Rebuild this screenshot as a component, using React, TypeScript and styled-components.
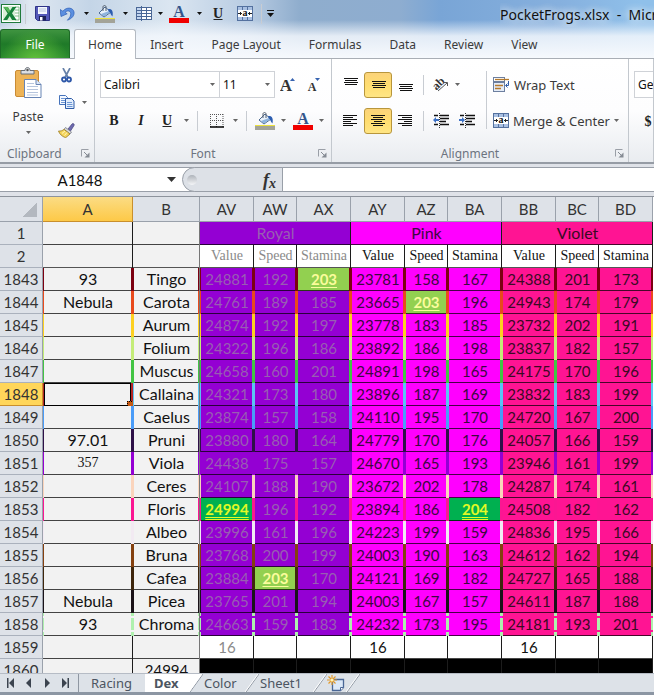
import React from "react";
import styled, { createGlobalStyle, css } from "styled-components";

const UI = `"Noto Sans", "Open Sans", sans-serif`;
const CELL = `Lato, "Liberation Sans", sans-serif`;
const SERIF = `"Liberation Serif", serif`;

const GlobalStyle = createGlobalStyle`
  * { box-sizing: border-box; }
  html, body { margin: 0; padding: 0; }
  body { font-family: ${UI}; font-size: 12px; color: #3b3b3b; background: #fff; }
  button, select, input { font: inherit; color: inherit; margin: 0; padding: 0; border: 0; background: none; border-radius: 0; }
  svg { display: block; flex: none; }
`;

const Window = styled.div`
  display: flex;
  flex-direction: column;
  height: 100vh;
  overflow: hidden;
`;

/* ---------- title bar and ribbon tabs ---------- */

const TopArea = styled.header`
  background:
    linear-gradient(to bottom, rgba(255, 255, 255, 0) 20px, rgba(243, 247, 252, 0.85) 36px, #f6f9fd 58px),
    linear-gradient(to right, #b4c8dd 0, #dfe8f1 30px, #c4d5e7 90px, #dbe6f1 170px, #b7cbe2 250px, #8fadcd 300px, #8eadd0 400px, #79a5d6 440px, #86b0de 560px, #8fc0ea 640px);
  border-bottom: 1px solid #a9aeb5;
`;

const TitleBar = styled.div`
  display: flex;
  align-items: center;
  height: 29px;
  padding-bottom: 2px;
`;

const QuickAccess = styled.div`
  display: flex;
  align-items: center;
  flex: none;
  height: 26px;
`;

const Title = styled.h1`
  margin: 2px 0 0 224px;
  min-width: 0;
  flex: 1;
  overflow: hidden;
  white-space: pre;
  font-size: 14px;
  font-weight: 400;
  line-height: 24px;
  color: #111;
  text-shadow: 0 0 8px #fff, 0 0 8px rgba(255, 255, 255, 0.7);
`;

const TabStrip = styled.nav`
  display: flex;
  height: 29px;
`;

const FileTab = styled.button`
  width: 70px;
  margin-right: 4px;
  flex: none;
  border: 1px solid #1d6a26;
  border-bottom: 0;
  border-radius: 3px 3px 0 0;
  color: #fff;
  background: radial-gradient(ellipse at 50% 110%, #63c23c 0, rgba(60, 160, 50, 0) 70%), linear-gradient(#3f9440, #1f7a28 50%, #2b8c2e);
`;

const RibbonTab = styled.button<{ $active?: boolean }>`
  flex: none;
  padding: 0 13px;
  margin-bottom: ${(p) => (p.$active ? "-1px" : "0")};
  border: 1px solid ${(p) => (p.$active ? "#b4bac2" : "transparent")};
  border-bottom: 0;
  border-radius: 3px 3px 0 0;
  background: ${(p) => (p.$active ? "#fff" : "none")};
`;

/* ---------- ribbon ---------- */

const Ribbon = styled.div`
  display: flex;
  height: 105px;
  flex: none;
  background: linear-gradient(#fff 0, #fdfdfe 50%, #e9ecf0 100%);
  border-bottom: 2px solid #969ca5;
`;

const Group = styled.section<{ $w?: number }>`
  display: flex;
  flex-direction: column;
  flex: ${(p) => (p.$w ? `none` : "1 0 0")};
  width: ${(p) => (p.$w ? `${p.$w}px` : "auto")};
  min-width: 0;
  overflow: hidden;
  border-right: 1px solid #c3c8ce;
`;

const GroupBody = styled.div`
  display: flex;
  flex: 1;
  padding: 12px 0 0 5px;
`;

const GroupFooter = styled.div`
  display: flex;
  align-items: center;
  flex: none;
  height: 17px;
  padding: 0 4px 0 7px;
  line-height: 17px;
  color: #6c7480;
`;

const GroupLabel = styled.span<{ $center?: boolean }>`
  flex: 1;
  padding-right: ${(p) => (p.$center ? "14px" : "0")};
  text-align: ${(p) => (p.$center ? "center" : "left")};
`;

const Rows = styled.div`
  display: flex;
  flex-direction: column;
  gap: 9px;
`;

const Row = styled.div`
  display: flex;
  align-items: center;
  height: 27px;
`;

const IconButton = styled.button<{ $w: number; $on?: boolean }>`
  display: flex;
  align-items: center;
  justify-content: center;
  flex: none;
  width: ${(p) => p.$w}px;
  height: 26px;
  ${(p) =>
    p.$on &&
    css`
      border: 1px solid #b8963c;
      border-radius: 3px;
      background: linear-gradient(#fbd37a, #ffdd70 50%, #ffe584);
    `}
`;

const Divider = styled.span<{ $w: number; $h?: number }>`
  flex: none;
  width: ${(p) => p.$w}px;
  height: ${(p) => p.$h ?? 20}px;
  background: linear-gradient(#c8ccd2, #c8ccd2) center / 1px 100% no-repeat;
`;

const ComboBox = styled.label<{ $w: number }>`
  display: flex;
  align-items: center;
  flex: none;
  width: ${(p) => p.$w}px;
  height: 27px;
  padding-right: 4px;
  margin-right: -1px;
  border: 1px solid #cfd2d7;
  background: #fff;
  color: #111;
`;

const ComboSelect = styled.select`
  flex: 1;
  min-width: 0;
  height: 25px;
  padding-left: 3px;
  appearance: none;
  outline: 0;
`;

const PasteButton = styled.button`
  display: flex;
  flex-direction: column;
  align-items: center;
  width: 56px;
  height: 72px;
`;

const PasteText = styled.span`
  line-height: 20px;
  margin: 9px 0 4px;
`;

const ClipboardBody = styled.div`
  display: flex;
  flex: 1;
  padding-top: 8px;
`;

const ClipTools = styled.div`
  display: flex;
  flex-direction: column;
`;

const ClipRow = styled(Row)`
  height: 26px;
  padding-bottom: 10px;
  &:nth-child(2) { padding-bottom: 8px; }
  &:nth-child(3) { padding-bottom: 4px; }
`;

const TextButton = styled.button`
  display: flex;
  align-items: center;
  gap: 4px;
  height: 27px;
  font-size: 13px;
  white-space: nowrap;
`;

/* ---------- formula bar ---------- */

const FormulaBar = styled.div`
  display: flex;
  flex: none;
  height: 33px;
  padding: 3px 0 4px;
  background: #dfe2e8;
  border-bottom: 1px solid #8d939c;
`;

const NameBox = styled.div`
  display: flex;
  align-items: center;
  flex: none;
  width: 182px;
  padding-right: 6px;
  border: solid #999fa8;
  border-width: 1px 0;
  background: #fff;
`;

const NameInput = styled.input`
  flex: 1;
  min-width: 0;
  padding-right: 7px;
  text-align: center;
  font-family: ${CELL};
  font-size: 15px;
  color: #111;
  outline: 0;
`;

const FxArea = styled.div`
  display: flex;
  align-items: center;
  justify-content: space-between;
  flex: none;
  width: 101px;
  padding: 0 6px 0 4px;
  background: #dde1e7;
  border: 1px solid #999fa8;
  border-radius: 13px 0 0 13px;
`;

const FxHolder = styled.div`
  display: flex;
  background: linear-gradient(#999fa8, #999fa8) top / 100% 1px no-repeat, linear-gradient(#999fa8, #999fa8) bottom / 100% 1px no-repeat, #fff;
`;

const Grip = styled.span`
  width: 10px;
  height: 10px;
  border-radius: 5px;
  background: linear-gradient(#aeb3ba, #f5f6f8);
`;

const FxButton = styled.button`
  font-family: ${SERIF};
  font-size: 18px;
  font-style: italic;
  font-weight: 700;
  line-height: 20px;
  color: #333;
  & sub { font-size: 14px; line-height: 0; vertical-align: -2px; }
`;

const FormulaInput = styled.input`
  flex: 1;
  min-width: 0;
  background: #fff;
  border: solid #999fa8;
  border-width: 1px 0;
  outline: 0;
`;

/* ---------- sheet ---------- */

const SheetArea = styled.main`
  flex: 1;
  min-height: 0;
  overflow: hidden;
  background: #fff;
`;

const Sheet = styled.table`
  width: 100%;
  table-layout: fixed;
  border-spacing: 0;
  font-family: ${CELL};
  font-size: 15px;
  line-height: 22px;
  color: #333;
`;

const Col = styled.col<{ $w?: number }>`
  width: ${(p) => (p.$w ? `${p.$w}px` : "auto")};
`;

const ColHead = styled.th<{ $on?: boolean }>`
  height: 25px;
  padding: 0;
  font-weight: 400;
  background: ${(p) => (p.$on ? "linear-gradient(#fbdc84, #fdc947)" : "#dee2e8")};
  border-right: 1px solid ${(p) => (p.$on ? "#c98f2c" : "#9aa1ab")};
  border-bottom: 1px solid ${(p) => (p.$on ? "#c98f2c" : "#9aa1ab")};
`;

const Corner = styled(ColHead)`
  background: linear-gradient(135deg, transparent 50%, #b3b8bf 50%) 22px 5px / 15px 15px no-repeat, #dee2e8;
`;

const RowHead = styled.th<{ $on?: boolean }>`
  height: 23px;
  padding: 0;
  font-weight: 400;
  background: ${(p) => (p.$on ? "#ffd65a" : "#dee2e8")};
  border-right: 1px solid ${(p) => (p.$on ? "#c98f2c" : "#9aa1ab")};
  border-bottom: 1px solid ${(p) => (p.$on ? "#c98f2c" : "#aab1bc")};
`;

const solid = (c: string) => `linear-gradient(${c}, ${c})`;
const dashes = (c: string) =>
  `linear-gradient(${c} 3px, transparent 3px 5px, ${c} 5px 17px, transparent 17px 19px, ${c} 19px)`;

type Mark = "top" | "high";

type CellLook = {
  $fill: string;
  $ink?: string;
  $bar?: string;
  $dashed?: boolean;
  $line?: string;
  $frozen?: boolean;
  $mark?: Mark;
  $serif?: boolean;
  $label?: boolean;
};

const cellBackground = (p: CellLook) => {
  const layers: string[] = [];
  if (p.$frozen) layers.push(`${solid("#777")} right / 1px 100% no-repeat`);
  if (p.$bar) {
    const paint = p.$dashed ? dashes(p.$bar) : solid(p.$bar);
    layers.push(`${paint} left / 1px 100% no-repeat`, `${paint} right / 2px 100% no-repeat`);
  } else {
    layers.push(`${solid("#1c1c1c")} right / 1px 100% no-repeat`);
  }
  layers.push(`${solid(p.$line ?? "rgba(0, 0, 0, 0.72)")} bottom / 100% 1px no-repeat`);
  return `${layers.join(", ")}, ${p.$fill}`;
};

const Cell = styled.td<CellLook>`
  position: relative;
  height: 23px;
  padding: 0 0 1px;
  text-align: center;
  white-space: nowrap;
  color: ${(p) => p.$ink ?? "#111"};
  background: ${cellBackground};
  ${(p) => p.$label && css`font-size: 16px;`}
  ${(p) => p.$serif && css`font-family: ${SERIF}; font-size: 14px;`}
  ${(p) =>
    p.$mark &&
    css`
      color: ${p.$mark === "top" ? "#e2f926" : "#fbfc9c"};
      font-weight: 700;
      text-decoration: underline ${p.$mark === "top" ? "double" : "solid"} 1px;
      text-underline-offset: 2px;
    `}
`;

const SelectionFrame = styled.span`
  position: absolute;
  inset: 0 2px 0 1px;
  border: 1px solid #000;
  box-shadow: 0 1px 0 #f2f2f2, 0 2px 0 #000;
  &::after {
    content: "";
    position: absolute;
    right: -4px;
    bottom: -3px;
    width: 5px;
    height: 5px;
    border: 1px dotted #000;
    background: #c65a14;
  }
`;

type Line = {
  n: number;
  a?: string;
  serif?: boolean;
  name: string;
  bar: string;
  v: string;
  marks?: Record<number, Mark>;
};

const lines: Line[] = [
  { n: 1843, a: "93", name: "Tingo", bar: "#7c0010", v: "24881 192 203 23781 158 167 24388 201 173", marks: { 2: "high" } },
  { n: 1844, a: "Nebula", name: "Carota", bar: "#e84a1c", v: "24761 189 185 23665 203 196 24943 174 179", marks: { 4: "high" } },
  { n: 1845, name: "Aurum", bar: "#fdd020", v: "24874 192 197 23778 183 185 23732 202 191" },
  { n: 1846, name: "Folium", bar: "#c4ec78", v: "24322 196 186 23892 186 198 23837 182 157" },
  { n: 1847, name: "Muscus", bar: "#42c444", v: "24658 160 201 24891 198 165 24175 170 196" },
  { n: 1848, name: "Callaina", bar: "#5cc4f4", v: "24321 173 180 23896 187 169 23832 183 199" },
  { n: 1849, name: "Caelus", bar: "#4a9cf8", v: "23874 157 158 24110 195 170 24720 167 200" },
  { n: 1850, a: "97.01", name: "Pruni", bar: "#2e1048", v: "23880 180 164 24779 170 176 24057 166 159" },
  { n: 1851, a: "357", serif: true, name: "Viola", bar: "#9400d3", v: "24438 175 157 24670 165 193 23946 161 199" },
  { n: 1852, name: "Ceres", bar: "#fad4bc", v: "24107 188 190 23672 202 178 24287 174 161" },
  { n: 1853, name: "Floris", bar: "#fb1692", v: "24994 196 192 23894 186 204 24508 182 162", marks: { 0: "top", 5: "top" } },
  { n: 1854, name: "Albeo", bar: "#f2eaf2", v: "23996 161 196 24223 199 159 24836 195 166" },
  { n: 1855, name: "Bruna", bar: "#84400f", v: "23768 200 199 24003 190 163 24612 162 194" },
  { n: 1856, name: "Cafea", bar: "#3e260c", v: "23884 203 170 24121 169 182 24727 165 188", marks: { 1: "high" } },
  { n: 1857, a: "Nebula", name: "Picea", bar: "#1a1218", v: "23765 201 194 24003 167 157 24611 187 188" },
  { n: 1858, a: "93", name: "Chroma", bar: "#aef0ae", v: "24663 159 183 24232 173 195 24181 193 201" },
];

const bands = [
  { title: "Royal", fill: "#9400d3", ink: "#985eb2", soft: "#8a8a8a" },
  { title: "Pink", fill: "#ff00ff", ink: "#3c0840", soft: "#111" },
  { title: "Violet", fill: "#ff1493", ink: "#3a0a24", soft: "#111" },
];
const columns = ["A", "B", "AV", "AW", "AX", "AY", "AZ", "BA", "BB", "BC", "BD"];
const widths = [43, 90, 67, 54, 43, 54, 54, 43, 54, 54, 43, 54];
const GREY = "#f2f2f2";

/* ---------- sheet tabs ---------- */

const SheetTabs = styled.footer`
  display: flex;
  flex: none;
  height: 22px;
  background: #dde2e8;
  border-top: 1px solid #b6bcc5;
  border-bottom: 3px solid #8c96a3;
`;

const NavButtons = styled.div`
  display: flex;
  align-items: center;
  width: 79px;
  padding: 0 3px 0 1px;
  border-right: 1px solid #8f97a2;
`;

const NavButton = styled.button`
  display: flex;
  flex: 1;
  align-items: center;
  justify-content: center;
`;

const SheetTab = styled.button<{ $w: number; $pad: number; $on?: boolean }>`
  && { padding-left: ${(p) => p.$pad}px; }
  flex: none;
  width: ${(p) => p.$w}px;
  font-size: 13px;
  line-height: 18px;
  text-align: left;
  color: #4c5561;
  font-weight: ${(p) => (p.$on ? 700 : 400)};
  background: ${(p) => (p.$on ? "#fff" : "none")};
`;

const NewSheet = styled.button`
  display: flex;
  align-items: center;
  width: 19px;
`;

/* ---------- icons ---------- */

const Arrow = ({ dark, big }: { dark?: boolean; big?: boolean }) => (
  <svg width={big ? 9 : 5} height={big ? 5 : 3} viewBox="0 0 5 3" preserveAspectRatio="none" aria-hidden="true">
    <path d="M0 0h5L2.500 3z" fill={dark ? "#111" : big ? "#333" : "#666"} />
  </svg>
);

const ExcelLogo = () => (
  <svg width="20" height="19" viewBox="0 0 20 19">
    <rect x=".5" y=".5" width="19" height="18" fill="#fff" stroke="#207a3c" />
    <rect x="2" y="2" width="13" height="15" fill="#d9efd8" />
    <path d="M14 3h4v13h-4" fill="#fff" stroke="#68ad70" strokeWidth=".8" />
    <path d="M14 6h4M14 9h4M14 12h4" stroke="#68ad70" strokeWidth=".8" />
    <path d="M2.500 3h4.300L9 6.800 11.500 3h3.800L11 9.300l4.500 6.700h-4.400L8.700 12 6.200 16h-4l4.500-6.600z" fill="#16813a" />
    <path d="M2.500 3h4.300L9 6.800l-1 2.300z" fill="#57b557" />
  </svg>
);

const SaveIcon = () => (
  <svg width="15" height="15" viewBox="0 0 15 15">
    <path d="M.5.5h14v14h-12l-2-2z" fill="#5358b8" stroke="#2f3487" />
    <rect x="3" y="1" width="9" height="7" fill="#f4f7fd" />
    <path d="M4 3h7M4 5h7" stroke="#b9c4de" />
    <rect x="4" y="10" width="7" height="4.500" fill="#1e2358" />
    <rect x="5" y="11" width="2.500" height="3.500" fill="#fff" />
  </svg>
);

const UndoIcon = () => (
  <svg width="15" height="14" viewBox="0 0 15 14">
    <path d="M0 2.500 1 9.500 7.200 6.800 5 5.400C8 2.500 11.500 4.200 10.600 8c-.4 2-1.600 3.600-3.200 5.200C12 11.600 14.600 8.500 14 5 13.200.6 6.800-.6 2.900 4.200z" fill="#5b8fe0" stroke="#2c5db5" strokeWidth=".7" />
  </svg>
);

const FillIcon = () => (
  <svg width="20" height="18" viewBox="0 0 20 18">
    <path d="M4 8 10 2l6 5-7 5z" fill="#e8f1fb" stroke="#4a6890" />
    <path d="M6 9l8-3 1.500 1L9 11.600z" fill="#8fb4de" />
    <path d="M8 6V2c0-2 3-2 3 0v4" fill="none" stroke="#56606e" />
    <path d="M13 4c4-.5 5.500 2 4.500 7.500C15.500 10 16 8 13.500 6z" fill="#2c5db0" />
    <rect y="13" width="20" height="1" fill="#ece23c" />
    <rect y="14" width="20" height="4" fill="#a3a398" />
  </svg>
);

const FontColorIcon = () => (
  <svg width="20" height="18" viewBox="0 0 20 18">
    <text x="10" y="12" textAnchor="middle" fontFamily="Liberation Serif, serif" fontWeight="700" fontSize="16" fill="#34558c">A</text>
    <rect y="13" width="20" height="5" fill="#f00000" />
  </svg>
);

const TableIcon = () => (
  <svg width="16" height="15" viewBox="0 0 16 15">
    <rect x=".5" y="1.500" width="15" height="12" fill="#fff" stroke="#4a6796" />
    <rect x="1" y="2" width="4" height="11" fill="#c3d6f0" />
    <path d="M5.500 0v15M10.500 2v12M1 4.500h15M1 7.500h15M1 10.500h15" stroke="#4a6796" />
  </svg>
);

const MergeIcon = () => (
  <svg width="16" height="15" viewBox="0 0 16 15">
    <rect x=".5" y=".5" width="15" height="14" fill="#a9c0e2" stroke="#54719f" />
    <path d="M5.500 0v4M10.500 0v4M5.500 11v4M10.500 11v4" stroke="#54719f" />
    <rect x="1" y="4" width="14" height="7" fill="#fff" />
    <text x="8" y="10" textAnchor="middle" fontFamily="Liberation Serif, serif" fontWeight="700" fontSize="10" fill="#111">a</text>
    <path d="M1 7.500h4M11 7.500h4M3.500 6v3M12.500 6v3" stroke="#222" />
  </svg>
);

const PasteIcon = () => (
  <svg width="27" height="31" viewBox="0 0 27 31">
    <rect x=".5" y="3.500" width="23" height="26" rx="1.500" fill="#edb356" stroke="#c98b35" />
    <path d="M6 7V3.500h4c0-4 5-4 5 0h4V7z" fill="#dcdfe3" stroke="#686e76" />
    <circle cx="12.500" cy="3" r="1.200" fill="#555" />
    <path d="M9.500 12.500H21l5 5v13H9.500z" fill="#fff" stroke="#6784b4" />
    <path d="M21 12.500v5h5" fill="#dce7f7" stroke="#6784b4" />
    <path d="M12 16.500h7M12 19.500h11M12 22.500h11M12 25.500h11M12 28h11" stroke="#b6c5dd" />
  </svg>
);

const CutIcon = () => (
  <svg width="11" height="15" viewBox="0 0 11 15">
    <path d="M2 0 7 9.500M9 0 4 9.500" stroke="#6781a8" strokeWidth="1.700" />
    <circle cx="3" cy="11.500" r="2" fill="none" stroke="#2d57a8" strokeWidth="1.800" />
    <circle cx="8" cy="11.500" r="2" fill="none" stroke="#2d57a8" strokeWidth="1.800" />
  </svg>
);

const CopyIcon = () => (
  <svg width="16" height="14" viewBox="0 0 16 14">
    <path d="M.5.5h6l2 2v7h-8z" fill="#f5f9ff" stroke="#4673bb" />
    <path d="M2 3.500h4M2 5.500h5M2 7.500h5" stroke="#6d96d4" />
    <path d="M6.500 3.500h6l2.500 2.500v7.500H6.500z" fill="#e3eefc" stroke="#2f5ca8" />
    <path d="M8 7.500h5M8 9.500h5.500M8 11.500h5.500" stroke="#6d96d4" />
  </svg>
);

const BrushIcon = () => (
  <svg width="17" height="15" viewBox="0 0 17 15">
    <path d="M10 6l4-5c1-1.200 2.800.2 2 1.500L12.500 8z" fill="#6f6ab0" stroke="#44447c" strokeWidth=".7" />
    <path d="M7.500 4.500l6 4.500-1.500 2L6 6.300z" fill="#d7d9dd" stroke="#6b6f78" strokeWidth=".7" />
    <path d="M6 6.300 12 11l-4.300 3.700C4 13.500 1.500 11 .5 8c2 .3 4-.3 5.500-1.700z" fill="#f5d55c" stroke="#9a7b25" strokeWidth=".8" />
    <path d="M7 8l-3 2.500M9 9.500 6.500 12.500" stroke="#fff6bb" />
  </svg>
);

const Launcher = () => (
  <svg width="9" height="9" viewBox="0 0 9 9">
    <path d="M.5 7.500v-7h7" fill="none" stroke="#9a9fa7" />
    <path d="M3 3l4 4" stroke="#858b94" />
    <path d="M8.500 3.500v5h-5z" fill="#858b94" />
  </svg>
);

const Glyph = ({ kind }: { kind: "B" | "I" | "U" }) => (
  <svg width="14" height="15" viewBox="0 0 14 15">
    <text x="7" y="12" textAnchor="middle" fontFamily="Liberation Serif, serif" fontWeight="700" fontSize="14" fontStyle={kind === "I" ? "italic" : "normal"} fill="#222">{kind}</text>
    {kind === "U" && <path d="M2.500 13.500h9" stroke="#222" />}
  </svg>
);

const SizeGlyph = ({ down }: { down?: boolean }) => (
  <svg width="16" height="16" viewBox="0 0 16 16">
    <text x={down ? 5 : 6} y="14" textAnchor="middle" fontFamily="Liberation Serif, serif" fontWeight="700" fontSize={down ? 12 : 17} fill="#333">A</text>
    <path d={down ? "M8 1h5l-2.500 3z" : "M10 4h5l-2.500-3z"} fill="#3763b0" />
  </svg>
);

const BordersIcon = () => (
  <svg width="14" height="14" viewBox="0 0 14 14">
    <path d="M.5 0v13M6.500 0v13M13 0v13M0 .5h14M0 6.500h14" stroke="#555" strokeDasharray="1 1" />
    <path d="M0 13h14" stroke="#000" strokeWidth="1.500" />
  </svg>
);

const Bars = ({ bars, top = 1, step = 2 }: { bars: [number, number][]; top?: number; step?: number }) => (
  <svg width="15" height="17" viewBox="0 0 15 17">
    {bars.map(([x, w], i) => (
      <rect key={i} x={x} y={top + i * step} width={w} height="1" fill="#111" />
    ))}
  </svg>
);

const threeBars: [number, number][] = [[1, 14], [2, 12], [1, 14], [2, 12]];
const leftBars: [number, number][] = [[0, 14], [0, 10], [0, 14], [0, 8], [0, 14], [0, 10]];
const midBars: [number, number][] = [[0, 14], [2, 10], [0, 14], [3, 8], [0, 14], [2, 10]];
const rightBars: [number, number][] = [[0, 14], [4, 10], [0, 14], [6, 8], [0, 14], [4, 10]];

const IndentIcon = ({ out }: { out?: boolean }) => (
  <svg width="16" height="15" viewBox="0 0 16 15">
    <path d="M1 2.500h4M7 2.500h9M7 5.500h9M7 8.500h6M1 11.500h4M7 11.500h9" stroke="#111" strokeWidth="1.400" />
    <path d="M6.500 0v15" stroke="#333" strokeDasharray="1 1" />
    <path d={out ? "M0 7l3-3v2h3v2H3v2z" : "M6 7 3 4v2H0v2h3v2z"} fill="#3a6fc4" />
  </svg>
);

const OrientIcon = () => (
  <svg width="16" height="15" viewBox="0 0 16 15">
    <text x="0" y="11" transform="rotate(-45 5 8)" fontFamily="Liberation Serif, serif" fontWeight="700" fontSize="12" fill="#333">ab</text>
    <path d="M5 14l9-8M11 5.500h3.500V9" fill="none" stroke="#555" />
  </svg>
);

const WrapIcon = () => (
  <svg width="17" height="15" viewBox="0 0 17 15">
    <rect x=".5" y=".5" width="11" height="4" fill="#fff" stroke="#6d7f9f" />
    <path d="M2 2.500h14" stroke="#b67a2c" strokeWidth="1.300" />
    <rect x=".5" y="5.500" width="11" height="9" fill="#e4ecf8" stroke="#6d7f9f" />
    <path d="M2 8.500h8M2 11.500h6" stroke="#b67a2c" strokeWidth="1.300" />
    <path d="M15.500 4v4.500H13M14.500 6.500l-2 2 2 2" fill="none" stroke="#2f5ca8" />
  </svg>
);

const Slant = ({ filled }: { filled?: boolean }) => (
  <svg width="14" height="18" viewBox="0 0 14 18">
    {filled && <path d="M0 0h13L1 18H0z" fill="#fff" />}
    <path d="M14 0 1 18" stroke="#8f97a2" />
    <path d="M13 0 0 18" stroke="#fff" />
  </svg>
);

const NewSheetIcon = () => (
  <svg width="19" height="17" viewBox="0 0 19 17">
    <path d="M5.500 4.500h11v8l-3 3h-8z" fill="#dbe8f8" stroke="#4a6796" strokeWidth="1.300" />
    <path d="M13.500 15.500v-3h3" fill="#fff" stroke="#4a6796" />
    <path d="M5 0v10M0 5h10M1.500 1.500l7 7M8.500 1.500l-7 7" stroke="#e39a2b" strokeWidth="1.200" />
    <circle cx="5" cy="5" r="1.600" fill="#fff3b8" />
  </svg>
);

const navShapes = [
  "M1 0h1.500v10H1zM8 0v10L3 5z",
  "M7 0v10L2 5z",
  "M2 0v10l5-5z",
  "M1 0v10l5-5zM6.500 0H8v10H6.500z",
];
const navNames = ["First sheet", "Previous sheet", "Next sheet", "Last sheet"];

/* ---------- sections ---------- */

const Footer = ({ label, center }: { label: string; center?: boolean }) => (
  <GroupFooter>
    <GroupLabel $center={center}>{label}</GroupLabel>
    <button aria-label={`${label} settings`}><Launcher /></button>
  </GroupFooter>
);

const Header = () => (
  <TopArea>
    <TitleBar>
      <QuickAccess>
        <IconButton $w={22} aria-label="Excel"><ExcelLogo /></IconButton>
        <Divider $w={7} />
        <IconButton $w={26} aria-label="Save"><SaveIcon /></IconButton>
        <IconButton $w={25} aria-label="Undo"><UndoIcon /></IconButton>
        <IconButton $w={12} aria-label="Undo list"><Arrow dark /></IconButton>
        <IconButton $w={26} aria-label="Fill color"><FillIcon /></IconButton>
        <IconButton $w={14} aria-label="Fill colors"><Arrow dark /></IconButton>
        <IconButton $w={24} aria-label="Table"><TableIcon /></IconButton>
        <IconButton $w={8} aria-label="Table styles"><Arrow dark /></IconButton>
        <IconButton $w={30} aria-label="Font color"><FontColorIcon /></IconButton>
        <IconButton $w={10} aria-label="Font colors"><Arrow dark /></IconButton>
        <IconButton $w={27} aria-label="Underline"><Glyph kind="U" /></IconButton>
        <IconButton $w={27} aria-label="Merge and center"><MergeIcon /></IconButton>
        <Divider $w={6} />
        <IconButton $w={12} aria-label="Customize toolbar">
          <svg width="7" height="7" viewBox="0 0 7 7"><path d="M0 .5h7" stroke="#111" /><path d="M0 3h7L3.500 7z" fill="#111" /></svg>
        </IconButton>
      </QuickAccess>
      <Title>{"PocketFrogs.xlsx  -  Microsoft Excel"}</Title>
    </TitleBar>
    <TabStrip>
      <FileTab>File</FileTab>
      {["Home", "Insert", "Page Layout", "Formulas", "Data", "Review", "View"].map((t) => (
        <RibbonTab key={t} $active={t === "Home"}>{t}</RibbonTab>
      ))}
    </TabStrip>
  </TopArea>
);

const RibbonPanel = () => (
  <Ribbon>
    <Group $w={95}>
      <ClipboardBody>
        <PasteButton>
          <PasteIcon />
          <PasteText>Paste</PasteText>
          <Arrow />
        </PasteButton>
        <ClipTools>
          <ClipRow><IconButton $w={21} aria-label="Cut"><CutIcon /></IconButton></ClipRow>
          <ClipRow>
            <IconButton $w={21} aria-label="Copy"><CopyIcon /></IconButton>
            <IconButton $w={15} aria-label="Copy options"><Arrow /></IconButton>
          </ClipRow>
          <ClipRow><IconButton $w={21} aria-label="Format painter"><BrushIcon /></IconButton></ClipRow>
        </ClipTools>
      </ClipboardBody>
      <Footer label="Clipboard" />
    </Group>

    <Group $w={237}>
      <GroupBody>
        <Rows>
          <Row>
            <ComboBox $w={120}>
              <ComboSelect aria-label="Font name"><option>Calibri</option></ComboSelect>
              <Arrow />
            </ComboBox>
            <ComboBox $w={56}>
              <ComboSelect aria-label="Font size"><option>11</option></ComboSelect>
              <Arrow />
            </ComboBox>
            <IconButton $w={28} aria-label="Grow font"><SizeGlyph /></IconButton>
            <IconButton $w={26} aria-label="Shrink font"><SizeGlyph down /></IconButton>
          </Row>
          <Row>
            <IconButton $w={27} aria-label="Bold"><Glyph kind="B" /></IconButton>
            <IconButton $w={27} aria-label="Italic"><Glyph kind="I" /></IconButton>
            <IconButton $w={26} aria-label="Underline"><Glyph kind="U" /></IconButton>
            <IconButton $w={13} aria-label="Underline styles"><Arrow /></IconButton>
            <Divider $w={8} />
            <IconButton $w={31} aria-label="Borders"><BordersIcon /></IconButton>
            <IconButton $w={7} aria-label="Border styles"><Arrow /></IconButton>
            <Divider $w={14} />
            <IconButton $w={24} aria-label="Fill color"><FillIcon /></IconButton>
            <IconButton $w={13} aria-label="Fill colors"><Arrow /></IconButton>
            <IconButton $w={26} aria-label="Font color"><FontColorIcon /></IconButton>
            <IconButton $w={11} aria-label="Font colors"><Arrow /></IconButton>
          </Row>
        </Rows>
      </GroupBody>
      <Footer label="Font" center />
    </Group>

    <Group $w={297}>
      <GroupBody>
        <Rows>
          <Row>
            <IconButton $w={27} aria-label="Top align"><Bars bars={threeBars} top={2} /></IconButton>
            <IconButton $w={28} $on aria-label="Middle align"><Bars bars={threeBars} top={5} /></IconButton>
            <IconButton $w={27} aria-label="Bottom align"><Bars bars={threeBars} top={8} /></IconButton>
            <Divider $w={9} />
            <IconButton $w={26} aria-label="Orientation"><OrientIcon /></IconButton>
            <IconButton $w={6} aria-label="Orientation options"><Arrow /></IconButton>
          </Row>
          <Row>
            <IconButton $w={27} aria-label="Align left"><Bars bars={leftBars} top={3} /></IconButton>
            <IconButton $w={28} $on aria-label="Center"><Bars bars={midBars} top={3} /></IconButton>
            <IconButton $w={27} aria-label="Align right"><Bars bars={rightBars} top={3} /></IconButton>
            <Divider $w={9} />
            <IconButton $w={26} aria-label="Decrease indent"><IndentIcon out /></IconButton>
            <IconButton $w={26} aria-label="Increase indent"><IndentIcon /></IconButton>
          </Row>
        </Rows>
        <Divider $w={13} $h={58} />
        <Rows>
          <TextButton><WrapIcon />Wrap Text</TextButton>
          <TextButton><MergeIcon />Merge &amp; Center<Arrow /></TextButton>
        </Rows>
      </GroupBody>
      <Footer label="Alignment" center />
    </Group>

    <Group>
      <GroupBody>
        <Rows>
          <Row>
            <ComboBox $w={120}>
              <ComboSelect aria-label="Number format"><option>General</option></ComboSelect>
              <Arrow />
            </ComboBox>
          </Row>
          <Row>
            <IconButton $w={27} aria-label="Currency">
              <svg width="10" height="16" viewBox="0 0 10 16">
                <text x="5" y="13" textAnchor="middle" fontFamily="Liberation Serif, serif" fontWeight="700" fontSize="14" fill="#222">$</text>
              </svg>
            </IconButton>
          </Row>
        </Rows>
      </GroupBody>
    </Group>
  </Ribbon>
);

const Grid = () => (
  <SheetArea>
    <Sheet>
      <colgroup>
        {widths.map((w, i) => <Col key={i} $w={w} />)}
        <Col />
      </colgroup>
      <thead>
        <tr>
          <Corner aria-label="Select all" />
          {columns.map((c) => <ColHead key={c} $on={c === "A"}>{c}</ColHead>)}
        </tr>
      </thead>
      <tbody>
        <tr>
          <RowHead>1</RowHead>
          <Cell $fill={GREY} />
          <Cell $fill={GREY} $frozen />
          {bands.map((b) => <Cell key={b.title} colSpan={3} $fill={b.fill} $ink={b.ink} $label>{b.title}</Cell>)}
        </tr>
        <tr>
          <RowHead>2</RowHead>
          <Cell $fill={GREY} $line="#555" />
          <Cell $fill={GREY} $line="#555" $frozen />
          {bands.map((b) =>
            ["Value", "Speed", "Stamina"].map((t) => (
              <Cell key={b.title + t} $fill="#fff" $ink={b.soft} $line="#555" $serif>{t}</Cell>
            ))
          )}
        </tr>
        {lines.map((l) => {
          const dashed = l.n === 1858;
          const selected = l.n === 1848;
          return (
            <tr key={l.n}>
              <RowHead $on={selected}>{l.n}</RowHead>
              {selected ? (
                <Cell $fill={GREY} $bar="#b42626"><SelectionFrame /></Cell>
              ) : (
                <Cell $fill={GREY} $bar={l.bar} $dashed={dashed} $serif={l.serif} $label>{l.a}</Cell>
              )}
              <Cell $fill={GREY} $bar={l.bar} $dashed={dashed} $frozen $label>{l.name}</Cell>
              {l.v.split(" ").map((v, i) => {
                const band = bands[Math.floor(i / 3)];
                const mark = l.marks?.[i];
                const fill = mark === "top" ? "#00b050" : mark === "high" ? "#92d050" : band.fill;
                return (
                  <Cell key={i} $fill={fill} $ink={band.ink} $bar={l.bar} $dashed={dashed} $mark={mark}>{v}</Cell>
                );
              })}
            </tr>
          );
        })}
        <tr>
          <RowHead>1859</RowHead>
          <Cell $fill={GREY} />
          <Cell $fill={GREY} $frozen />
          {columns.slice(2).map((c, i) => (
            <Cell key={c} $fill="#fff" $ink={bands[Math.floor(i / 3)].soft}>{i % 3 === 0 ? "16" : ""}</Cell>
          ))}
        </tr>
        <tr>
          <RowHead>1860</RowHead>
          <Cell $fill={GREY} />
          <Cell $fill={GREY} $frozen>24994</Cell>
          {columns.slice(2).map((c) => <Cell key={c} $fill="#000" />)}
        </tr>
      </tbody>
    </Sheet>
  </SheetArea>
);

export default function App() {
  return (
    <Window>
      <GlobalStyle />
      <Header />
      <RibbonPanel />
      <FormulaBar>
        <NameBox>
          <NameInput aria-label="Name box" defaultValue="A1848" />
          <Arrow big />
        </NameBox>
        <FxHolder>
          <FxArea>
            <Grip />
            <FxButton aria-label="Insert function">f<sub>x</sub></FxButton>
          </FxArea>
        </FxHolder>
        <FormulaInput aria-label="Formula" />
      </FormulaBar>
      <Grid />
      <SheetTabs>
        <NavButtons>
          {navShapes.map((d, i) => (
            <NavButton key={d} aria-label={navNames[i]}>
              <svg width="9" height="10" viewBox="0 0 9 10"><path d={d} fill="#3c444f" /></svg>
            </NavButton>
          ))}
        </NavButtons>
        <SheetTab $w={66} $pad={12}>Racing</SheetTab>
        <SheetTab $w={44} $pad={9} $on>Dex</SheetTab>
        <Slant filled />
        <SheetTab $w={42} $pad={1}>Color</SheetTab>
        <Slant />
        <SheetTab $w={54} $pad={1}>Sheet1</SheetTab>
        <Slant />
        <NewSheet aria-label="Insert worksheet"><NewSheetIcon /></NewSheet>
        <Slant />
      </SheetTabs>
    </Window>
  );
}
